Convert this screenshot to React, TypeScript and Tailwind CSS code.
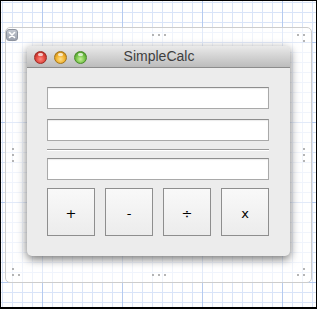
import React from "react";

function Dot() {
  return <span className="block w-[2px] h-[2px] rounded-full bg-[#9c9c9c]" />;
}

function DotRow() {
  return (
    <div className="flex gap-[4px]">
      <Dot />
      <Dot />
      <Dot />
    </div>
  );
}

function DotCol() {
  return (
    <div className="flex flex-col gap-[4px]">
      <Dot />
      <Dot />
      <Dot />
    </div>
  );
}

function Light({ className }: { className: string }) {
  return (
    <span className={`relative w-[13px] h-[13px] rounded-full border ${className}`}>
      <span className="absolute left-[3px] top-[1px] w-[5px] h-[3px] rounded-full bg-white/70" />
    </span>
  );
}

function Field() {
  return (
    <div className="w-[222px] h-[22px] bg-white border border-[#a9a9a9] border-t-[#8e8e8e] shadow-[inset_0_1px_1px_rgba(0,0,0,0.08)]" />
  );
}

export default function App() {
  const ops = ["+", "-", "÷", "x"];

  return (
    <div className="w-[317px] h-[309px] border-t border-l border-r border-b-2 border-black pl-[4px] pt-[26px] bg-white [background-image:linear-gradient(to_right,#b6cbf0_1px,transparent_1px),linear-gradient(to_bottom,#b6cbf0_1px,transparent_1px),linear-gradient(to_right,#d9e4f8_1px,transparent_1px),linear-gradient(to_bottom,#d9e4f8_1px,transparent_1px)] [background-size:80px_80px,80px_80px,10px_10px,10px_10px] [background-position:41px_0,0_41px,1px_0,0_1px]">
      {/* canvas panel */}
      <div className="relative w-[307px] h-[256px] rounded-[5px] border border-[#cdcdcd] bg-white/60 pl-[21px] pt-[18px]">
        <span className="absolute left-0 top-[1px] w-[12px] h-[12px] rounded-[3px] border border-[#8d939e] bg-gradient-to-b from-[#c3c8d1] to-[#9ba1ad] flex items-center justify-center">
          <svg width="8" height="8" viewBox="0 0 8 8">
            <path d="M1.5 1.5 L6.5 6.5 M6.5 1.5 L1.5 6.5" stroke="#fff" strokeWidth="1.6" strokeLinecap="round" />
          </svg>
        </span>

        {/* resize handles */}
        <div className="absolute inset-[6px] flex flex-col justify-between pointer-events-none">
          <div className="flex justify-between items-start">
            <div className="w-[8px]" />
            <DotRow />
            <div className="flex flex-col items-end gap-[4px]">
              <div className="flex gap-[4px]">
                <Dot />
                <Dot />
              </div>
              <Dot />
            </div>
          </div>
          <div className="flex justify-between">
            <DotCol />
            <DotCol />
          </div>
          <div className="flex justify-between items-end">
            <div className="flex flex-col items-start gap-[4px]">
              <Dot />
              <div className="flex gap-[4px]">
                <Dot />
                <Dot />
              </div>
            </div>
            <DotRow />
            <div className="flex flex-col items-end gap-[4px]">
              <Dot />
              <div className="flex gap-[4px]">
                <Dot />
                <Dot />
              </div>
            </div>
          </div>
        </div>

        {/* window */}
        <div className="relative w-[263px] h-[210px] rounded-[5px] bg-[#ececec] shadow-[0_3px_10px_rgba(0,0,0,0.55)] flex flex-col overflow-hidden">
          <div className="relative h-[22px] shrink-0 rounded-t-[5px] border-b border-[#8c8c8c] bg-gradient-to-b from-[#eaeaea] to-[#bcbcbc] flex items-center">
            <div className="flex items-center gap-[7px] pl-[7px] pt-[1px]">
              <Light className="border-[#9b2b25] bg-[radial-gradient(circle_at_50%_65%,#ff8a80_0%,#e0443b_50%,#a3211b_100%)]" />
              <Light className="border-[#a3761c] bg-[radial-gradient(circle_at_50%_65%,#ffe08a_0%,#f0b02a_50%,#b7780f_100%)]" />
              <Light className="border-[#4a8a2a] bg-[radial-gradient(circle_at_50%_65%,#c7f29a_0%,#74c246_50%,#3c8a1c_100%)]" />
            </div>
            <span className="absolute inset-0 flex items-center justify-center text-[14px] text-[#3f3f3f] font-['Liberation_Sans',Arial,sans-serif] pl-[1px]">
              SimpleCalc
            </span>
          </div>

          <div className="flex flex-col pl-[20px] pt-[19px]">
            <Field />
            <div className="mt-[10px]">
              <Field />
            </div>
            <div className="mt-[8px] w-[222px] h-[2px] border-t border-[#9a9a9a] border-b border-b-white" />
            <div className="mt-[7px]">
              <Field />
            </div>
            <div className="mt-[8px] flex gap-[10px]">
              {ops.map((op) => (
                <button
                  key={op}
                  className="w-[48px] h-[48px] border border-[#8e8e8e] bg-gradient-to-b from-[#f9f9f9] to-[#ececec] flex items-center justify-center pt-[4px] text-[13px] text-black font-['DejaVu_Sans',sans-serif]"
                >
                  {op}
                </button>
              ))}
            </div>
          </div>
        </div>
      </div>
    </div>
  );
}
